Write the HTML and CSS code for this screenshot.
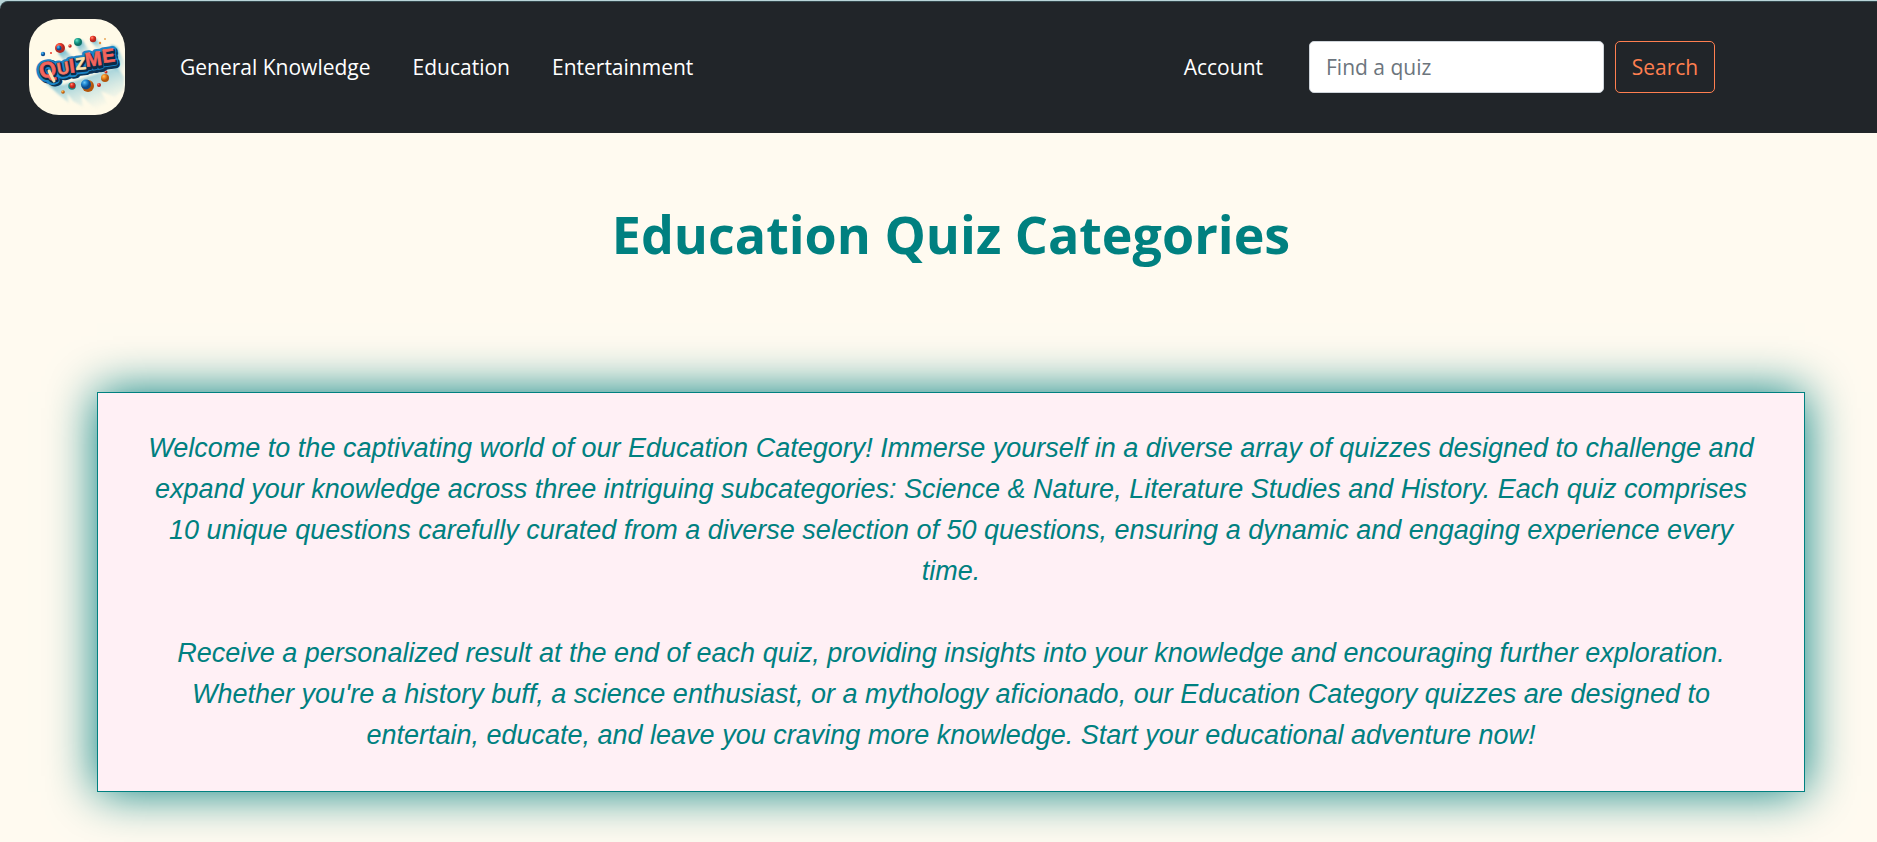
FILE: index.html
```html
<!DOCTYPE html>
<html lang="en">
<head>
<meta charset="utf-8">
<meta name="viewport" content="width=device-width, initial-scale=1">
<title>QuizMe - Education</title>
<link rel="stylesheet" href="styles.css">
</head>
<body>
<header class="topbar">
  <nav class="navbar">
    <a class="brand" href="#" aria-label="QuizMe home">
      <svg class="logo" viewBox="0 0 96 96" aria-hidden="true">
        <defs>
          <radialGradient id="red" cx=".35" cy=".3"><stop offset="0" stop-color="#ff9a80"/><stop offset=".5" stop-color="#ee3a2c"/><stop offset="1" stop-color="#b3261e"/></radialGradient>
          <radialGradient id="blue" cx=".35" cy=".3"><stop offset="0" stop-color="#6cc4f5"/><stop offset=".5" stop-color="#1e86d2"/><stop offset="1" stop-color="#0c4b8c"/></radialGradient>
          <radialGradient id="orange" cx=".35" cy=".3"><stop offset="0" stop-color="#ffc46a"/><stop offset=".5" stop-color="#ef8a1d"/><stop offset="1" stop-color="#b3560c"/></radialGradient>
          <radialGradient id="green" cx=".35" cy=".3"><stop offset="0" stop-color="#6fe0c8"/><stop offset=".5" stop-color="#1fa893"/><stop offset="1" stop-color="#0c7468"/></radialGradient>
          <linearGradient id="shade" x1="0" y1="0" x2=".7" y2="1"><stop offset="0" stop-color="#1f93bd" stop-opacity=".9"/><stop offset="1" stop-color="#8fd0e0" stop-opacity="0"/></linearGradient>
          <filter id="soft" x="-20%" y="-20%" width="140%" height="140%"><feGaussianBlur stdDeviation="1.2"/></filter>
        </defs>
        <rect width="96" height="96" fill="#fffae8"/>
        <g fill="url(#shade)" filter="url(#soft)">
          <path d="M14 61L34 66L88 48L95 58V70L86 78L72 72L78 84L66 90L52 76L54 88L44 82L38 74L40 84L30 76Z"/>
          <path d="M29 34L35 30L50 44L38 46Z"/>
          <path d="M47 25L53 21L62 34L54 40Z"/>
          <path d="M62 22L67 20L76 30L70 32Z"/>
          <path d="M82 26L88 28L96 44V60L86 50Z"/>
        </g>
        <g class="logo-word">
          <g fill="#0b3355" stroke="#0b3355" stroke-width="8">
            <text x="14" y="62" font-size="22" transform="rotate(-14 14 62)">Q</text>
            <text x="31" y="58" font-size="17" transform="rotate(-10 31 58)">U</text>
            <text x="43" y="56" font-size="20" transform="rotate(-8 43 56)">I</text>
            <text x="48" y="53" font-size="17" transform="rotate(-6 48 53)">Z</text>
            <text x="59" y="51" font-size="20" transform="rotate(-8 59 51)">M</text>
            <text x="75" y="47" font-size="19" transform="rotate(-8 75 47)">E</text>
          </g>
          <g fill="#1b84c6" stroke="#1b84c6" stroke-width="7">
            <text x="12" y="61" font-size="22" transform="rotate(-14 12 61)">Q</text>
            <text x="29" y="57" font-size="17" transform="rotate(-10 29 57)">U</text>
            <text x="41" y="55" font-size="20" transform="rotate(-8 41 55)">I</text>
            <text x="47" y="52" font-size="17" transform="rotate(-6 47 52)">Z</text>
            <text x="57" y="49" font-size="20" transform="rotate(-8 57 49)">M</text>
            <text x="74" y="45" font-size="19" transform="rotate(-8 74 45)">E</text>
          </g>
          <g fill="#0a2b48" stroke="#0a2b48" stroke-width="3">
            <text x="13" y="61" font-size="22" transform="rotate(-14 13 61)">Q</text>
            <text x="30" y="57" font-size="17" transform="rotate(-10 30 57)">U</text>
            <text x="42" y="55" font-size="20" transform="rotate(-8 42 55)">I</text>
            <text x="48" y="52" font-size="17" transform="rotate(-6 48 52)">Z</text>
            <text x="58" y="50" font-size="20" transform="rotate(-8 58 50)">M</text>
            <text x="75" y="46" font-size="19" transform="rotate(-8 75 46)">E</text>
          </g>
          <g fill="#f4645c" stroke="#f4645c" stroke-width=".6">
            <text x="12" y="60" font-size="22" transform="rotate(-14 12 60)">Q</text>
            <text x="29" y="56" font-size="17" transform="rotate(-10 29 56)" fill="#f5856c">U</text>
            <text x="41" y="54" font-size="20" transform="rotate(-8 41 54)">I</text>
            <text x="47" y="51" font-size="17" transform="rotate(-6 47 51)" fill="#fbe3b0" stroke="#fbe3b0">Z</text>
            <text x="57" y="48" font-size="20" transform="rotate(-8 57 48)">M</text>
            <text x="74" y="44" font-size="19" transform="rotate(-8 74 44)">E</text>
          </g>
          <path d="M20 52L25 62" fill="none" stroke="#fbe3b0" stroke-width="3" stroke-linecap="round"/>
        </g>
        <circle cx="31" cy="29" r="5" fill="url(#red)"/><circle cx="30" cy="29" r="2.5" fill="url(#blue)"/>
        <circle cx="49" cy="23" r="4" fill="url(#green)"/>
        <circle cx="64" cy="20" r="3.2" fill="url(#red)"/>
        <circle cx="14" cy="35" r="2.2" fill="url(#blue)"/>
        <circle cx="22" cy="34" r="1" fill="#ee3a2c"/>
        <circle cx="41" cy="27" r="1.7" fill="url(#red)"/>
        <circle cx="71" cy="24" r="1.2" fill="#e88b3a"/><circle cx="76" cy="20" r="1" fill="#e8a75a"/>
        <circle cx="43" cy="67" r="3.8" fill="#168f8c"/><circle cx="43.500" cy="66.500" r="2.900" fill="url(#red)"/>
        <circle cx="59" cy="67" r="6" fill="url(#orange)"/><circle cx="57" cy="65.500" r="5" fill="url(#blue)"/>
        <circle cx="76" cy="59" r="4" fill="url(#orange)"/>
        <circle cx="70" cy="66" r="2" fill="url(#red)"/>
        <circle cx="77" cy="53" r="1.500" fill="url(#red)"/>
        <circle cx="34" cy="73" r="1.800" fill="url(#orange)"/>
      </svg>
    </a>
    <ul class="links">
      <li><a href="#">General Knowledge</a></li>
      <li><a href="#">Education</a></li>
      <li><a href="#">Entertainment</a></li>
    </ul>
    <a class="account" href="#">Account</a>
    <form class="search" role="search">
      <input class="search-field" type="search" placeholder="Find a quiz" aria-label="Find a quiz">
      <button class="search-button" type="submit">Search</button>
    </form>
  </nav>
</header>
<main class="content">
  <h1 class="title">Education Quiz Categories</h1>
  <section class="intro">
    <p>Welcome to the captivating world of our Education Category! Immerse yourself in a diverse array of quizzes designed to challenge and expand your knowledge across three intriguing subcategories: Science &amp; Nature, Literature Studies and History. Each quiz comprises 10 unique questions carefully curated from a diverse selection of 50 questions, ensuring a dynamic and engaging experience every time.</p>
    <p>Receive a personalized result at the end of each quiz, providing insights into your knowledge and encouraging further exploration. Whether you're a history buff, a science enthusiast, or a mythology aficionado, our Education Category quizzes are designed to entertain, educate, and leave you craving more knowledge. Start your educational adventure now!</p>
  </section>
</main>
</body>
</html>
```
FILE: styles.css
```css
* {
  box-sizing: border-box;
}

body {
  margin: 0;
  background: #fffaf0;
  font-family: "Segoe UI", "Open Sans", "Noto Sans", sans-serif;
}

.topbar {
  background: #b9d5d8;
  padding-top: 1px;
}

.navbar {
  display: flex;
  align-items: center;
  min-height: 132px;
  padding: 16px 162px 17px 29px;
  background: #212529;
  border-top: 1px solid #34494e;
  border-top-left-radius: 8px;
  font-size: 21px;
  line-height: 32px;
}

.brand {
  display: block;
  width: 96px;
  height: 96px;
  border-radius: 30px;
  overflow: hidden;
}

.logo {
  display: block;
  width: 100%;
  height: 100%;
}

.logo-word {
  font-family: "Liberation Sans", Arial, sans-serif;
  font-weight: 700;
  stroke-linejoin: round;
}

.links {
  display: flex;
  gap: 42px;
  margin: 0;
  padding: 0 0 0 55px;
  list-style: none;
}

.links a,
.account {
  color: #fff;
  text-decoration: none;
  white-space: nowrap;
}

.account {
  margin-left: auto;
}

.search {
  display: flex;
  gap: 11px;
  margin-left: 46px;
}

.search-field,
.search-button {
  height: 52px;
  border-radius: 5px;
  font: inherit;
}

.search-field {
  width: 295px;
  padding: 0 16px;
  border: 1px solid #ced4da;
  background: #fff;
  color: #212529;
}

.search-field::placeholder {
  color: #6c757d;
  opacity: 1;
}

.search-button {
  width: 100px;
  padding: 0;
  border: 1px solid #ff7f50;
  background: transparent;
  color: #ff7f50;
}

.content {
  padding: 63px 72px 50px 97px;
  color: #008080;
}

.title {
  margin: 0;
  font-size: 52px;
  font-weight: 700;
  line-height: 75px;
  text-align: center;
}

.intro {
  display: grid;
  gap: 41px;
  margin-top: 121px;
  padding: 35px 44px;
  border: 1px solid #008080;
  background: #fff0f5;
  box-shadow: 0 0 46px #008080;
  font-family: Arial, "Liberation Sans", sans-serif;
  font-size: 27px;
  font-style: italic;
  line-height: 41px;
  text-align: center;
}

.intro p {
  margin: 0;
}
```
